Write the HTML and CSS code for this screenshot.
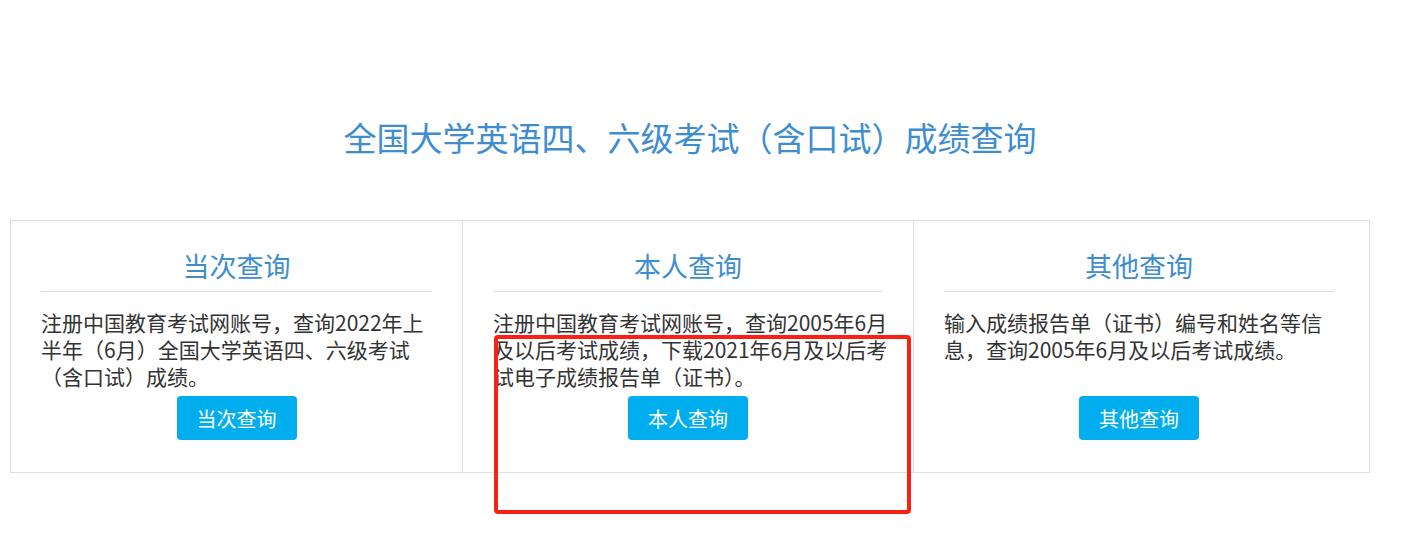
FILE: index.html
```html
<!DOCTYPE html>
<html lang="zh-CN">
<head>
    <meta charset="UTF-8">
    <meta name="viewport" content="width=device-width, initial-scale=1.0">
    <title>全国大学英语四、六级考试（含口试）成绩查询</title>
    <link rel="stylesheet" href="styles.css">
</head>
<body>

    <div class="container">
        <h1 class="page-title">全国大学英语四、六级考试（含口试）成绩查询</h1>

        <div class="query-box">
            <!-- 当次查询 -->
            <div class="query-col">
                <h2 class="query-title">当次查询</h2>
                <p class="query-desc">注册中国教育考试网账号，查询2022年上半年（6月）全国大学英语四、六级考试（含口试）成绩。</p>
                <div class="query-action">
                    <button class="query-btn">当次查询</button>
                </div>
            </div>

            <!-- 本人查询 -->
            <div class="query-col">
                <h2 class="query-title">本人查询</h2>
                <p class="query-desc">注册中国教育考试网账号，查询2005年6月及以后考试成绩，下载2021年6月及以后考试电子成绩报告单（证书）。</p>
                <div class="query-action">
                    <button class="query-btn">本人查询</button>
                </div>
            </div>

            <!-- 其他查询 -->
            <div class="query-col">
                <h2 class="query-title">其他查询</h2>
                <p class="query-desc">输入成绩报告单（证书）编号和姓名等信息，查询2005年6月及以后考试成绩。</p>
                <div class="query-action">
                    <button class="query-btn">其他查询</button>
                </div>
            </div>
        </div>
    </div>

    <!-- annotation frame drawn over the screenshot -->
    <div class="mark-frame"></div>

</body>
</html>
```

FILE: styles.css
```css
body {
    font-family: "Noto Sans CJK SC", "Noto Sans", sans-serif;
    background-color: #fff;
    color: #333;
    margin: 0;
    padding: 0;
}
.container {
    width: 1360px;
    margin-left: 10px;
}
.page-title {
    margin: 0 0 62px 0;
    padding-top: 116px;
    line-height: 42px;
    font-size: 33px;
    font-weight: normal;
    color: #3e8dd0;
    text-align: center;
}
.query-box {
    display: grid;
    grid-template-columns: repeat(3, 451px);
    border: 1px solid #dedede;
}
.query-col {
    padding: 25px 30px 32px 30px;
}
.query-col + .query-col {
    border-left: 1px solid #dedede;
}
.query-title {
    margin: 0;
    padding-bottom: 5px;
    line-height: 40px;
    font-size: 27px;
    font-weight: normal;
    color: #3e8dd0;
    text-align: center;
    border-bottom: 1px solid #dedede;
}
.query-desc {
    margin: 17px -6px 0 0;
    min-height: 81px;
    line-height: 27px;
    font-size: 21px;
}
.query-action {
    margin-top: 6px;
    text-align: center;
}
.query-btn {
    width: 120px;
    height: 44px;
    padding: 0;
    background-color: #00aeef;
    color: white;
    border: none;
    border-radius: 4px;
    font-family: inherit;
    font-size: 20px;
    cursor: pointer;
}
.query-btn:hover {
    background-color: #0096d0;
}
.mark-frame {
    position: absolute;
    left: 494px;
    top: 335px;
    width: 409px;
    height: 171px;
    border: 4px solid #fc1f14;
    border-radius: 4px;
    pointer-events: none;
}
```
